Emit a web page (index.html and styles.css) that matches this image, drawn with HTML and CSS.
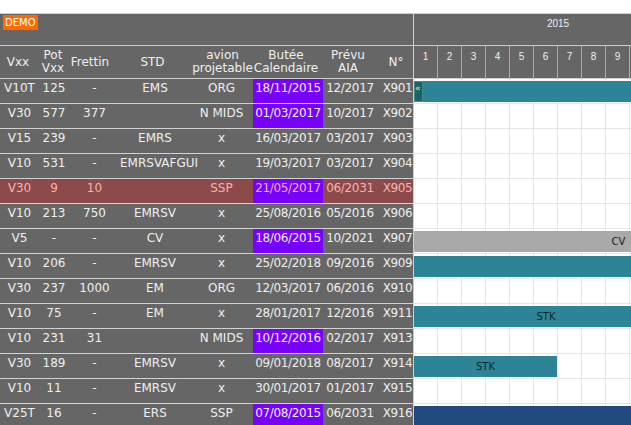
FILE: index.html
```html
<!DOCTYPE html>
<html lang="fr">
<head>
<meta charset="utf-8">
<title>Planning avions</title>
<link rel="stylesheet" href="styles.css">
</head>
<body>
<div class="chart">
  <div class="grid-pane">
    <div class="head-top"><span class="demo">DEMO</span></div>
    <div class="head-cols">
      <div>Vxx</div>
      <div>Pot<br>Vxx</div>
      <div>Frettin</div>
      <div>STD</div>
      <div>avion<br>projetable</div>
      <div>Butée<br>Calendaire</div>
      <div>Prévu<br>AIA</div>
      <div>N°</div>
    </div>
    <div class="row"><span>V10T</span><span>125</span><span>-</span><span>EMS</span><span>ORG</span><span class="due">18/11/2015</span><span>12/2017</span><span>X901</span></div>
    <div class="row"><span>V30</span><span>577</span><span>377</span><span></span><span>N MIDS</span><span class="due">01/03/2017</span><span>10/2017</span><span>X902</span></div>
    <div class="row"><span>V15</span><span>239</span><span>-</span><span>EMRS</span><span>x</span><span>16/03/2017</span><span>03/2017</span><span>X903</span></div>
    <div class="row"><span>V10</span><span>531</span><span>-</span><span>EMRSVAFGUI</span><span>x</span><span>19/03/2017</span><span>03/2017</span><span>X904</span></div>
    <div class="row alert"><span>V30</span><span>9</span><span>10</span><span></span><span>SSP</span><span class="due">21/05/2017</span><span>06/2031</span><span>X905</span></div>
    <div class="row"><span>V10</span><span>213</span><span>750</span><span>EMRSV</span><span>x</span><span>25/08/2016</span><span>05/2016</span><span>X906</span></div>
    <div class="row"><span>V5</span><span>-</span><span>-</span><span>CV</span><span>x</span><span class="due">18/06/2015</span><span>10/2021</span><span>X907</span></div>
    <div class="row"><span>V10</span><span>206</span><span>-</span><span>EMRSV</span><span>x</span><span>25/02/2018</span><span>09/2016</span><span>X909</span></div>
    <div class="row"><span>V30</span><span>237</span><span>1000</span><span>EM</span><span>ORG</span><span>12/03/2017</span><span>06/2016</span><span>X910</span></div>
    <div class="row"><span>V10</span><span>75</span><span>-</span><span>EM</span><span>x</span><span>28/01/2017</span><span>12/2016</span><span>X911</span></div>
    <div class="row"><span>V10</span><span>231</span><span>31</span><span></span><span>N MIDS</span><span class="due">10/12/2016</span><span>02/2017</span><span>X913</span></div>
    <div class="row"><span>V30</span><span>189</span><span>-</span><span>EMRSV</span><span>x</span><span>09/01/2018</span><span>08/2017</span><span>X914</span></div>
    <div class="row"><span>V10</span><span>11</span><span>-</span><span>EMRSV</span><span>x</span><span>30/01/2017</span><span>01/2017</span><span>X915</span></div>
    <div class="row"><span>V25T</span><span>16</span><span>-</span><span>ERS</span><span>SSP</span><span class="due">07/08/2015</span><span>06/2031</span><span>X916</span></div>
  </div>

  <div class="timeline">
    <div class="years"><div class="year">2015</div><div class="year">2016</div></div>
    <div class="months">
      <div>1</div><div>2</div><div>3</div><div>4</div><div>5</div><div>6</div>
      <div>7</div><div>8</div><div>9</div><div>10</div><div>11</div><div>12</div>
    </div>
    <div class="lane"><div class="bar teal" style="width:420px"><span class="prev">«</span></div></div>
    <div class="lane"></div>
    <div class="lane"></div>
    <div class="lane"></div>
    <div class="lane"></div>
    <div class="lane"></div>
    <div class="lane"><div class="bar grey" style="width:409px">CV</div></div>
    <div class="lane"><div class="bar teal" style="width:420px"></div></div>
    <div class="lane"></div>
    <div class="lane"><div class="bar teal" style="width:264px">STK</div></div>
    <div class="lane"></div>
    <div class="lane"><div class="bar teal" style="width:143px">STK</div></div>
    <div class="lane"></div>
    <div class="lane"><div class="bar navy" style="width:420px"></div></div>
  </div>
</div>
</body>
</html>
```

FILE: styles.css
```css
html, body {
  margin: 0;
  background: #fff;
}

body {
  font-family: "DejaVu Sans", sans-serif;
  font-size: 12px;
  color: #efefef;
}

.chart {
  display: flex;
  width: 631px;
  margin-top: 13px;
  border-top: 1px solid #cfcfcf;
  overflow: hidden;
}

/* left grid */
.grid-pane {
  flex: none;
  width: 413px;
  overflow: hidden;
  background: #666;
}

.head-top {
  height: 32px;
  box-sizing: border-box;
  border-bottom: 1px solid #cfcfcf;
  padding: 1px 0 0 3px;
}

.demo {
  display: inline-block;
  background: #ff6a00;
  color: #fff;
  font-size: 10px;
  line-height: 15px;
  padding: 0 2px;
}

.head-cols {
  display: grid;
  grid-template-columns: 36px 34px 40px 85px 55px 72px 52px 44px;
  width: 418px;
  height: 32px;
  border-bottom: 1px solid #cfcfcf;
  line-height: 13px;
}

.head-cols > div {
  display: flex;
  align-items: center;
  justify-content: center;
  text-align: center;
  white-space: nowrap;
}

.row {
  display: grid;
  grid-template-columns: 39px 30px 51px 70px 63px 70px 54px 41px;
  width: 418px;
  height: 24px;
  border-bottom: 1px solid #d2d2d2;
  line-height: 19px;
}

.row > span {
  text-align: center;
  white-space: nowrap;
}

/* date columns run a touch tighter */
.row > span:nth-child(6),
.row > span:nth-child(7),
.row > span:nth-child(8) {
  letter-spacing: -0.35px;
}

.row .due {
  background: #7700ff;
}

.row.alert {
  background: #8c4a4a;
  color: #f7b4ae;
}

/* timeline */
.timeline {
  flex: 1;
  overflow: hidden;
  border-left: 1px solid #cfcfcf;
}

.years {
  display: flex;
  height: 31px;
  border-bottom: 1px solid #cfcfcf;
  background: #666;
  font-family: "Liberation Sans", sans-serif;
  font-size: 10px;
  line-height: 14px;
}

.year {
  flex: none;
  width: 288px;
  padding-top: 3px;
  text-align: center;
}

.months {
  display: flex;
  height: 32px;
  border-bottom: 1px solid #cfcfcf;
  background: #666;
  font-family: "Liberation Sans", sans-serif;
  font-size: 10px;
  line-height: 14px;
}

.months > div {
  flex: none;
  width: 24px;
  box-sizing: border-box;
  border-right: 1px solid #aaa;
  padding-top: 4px;
  text-align: center;
}

.lane {
  height: 22px;
  padding-top: 2px;
  border-bottom: 1px solid #e6e6e6;
  background: repeating-linear-gradient(to right, transparent 0 23px, #e6e6e6 23px 24px);
}

.bar {
  height: 21px;
  line-height: 21px;
  font-size: 10px;
  color: #10262b;
  text-align: center;
  white-space: nowrap;
}

.bar.teal { background: #2e8497; }
.bar.grey { background: #a9a9a9; }
.bar.navy { background: #1f4a7b; }

.prev {
  float: left;
  width: 9px;
  height: 21px;
  box-sizing: border-box;
  border: 1px solid #3d8f8a;
  background: #1b6461;
  color: #d8f0f0;
  font-size: 9px;
  line-height: 12px;
  text-align: left;
}
```
